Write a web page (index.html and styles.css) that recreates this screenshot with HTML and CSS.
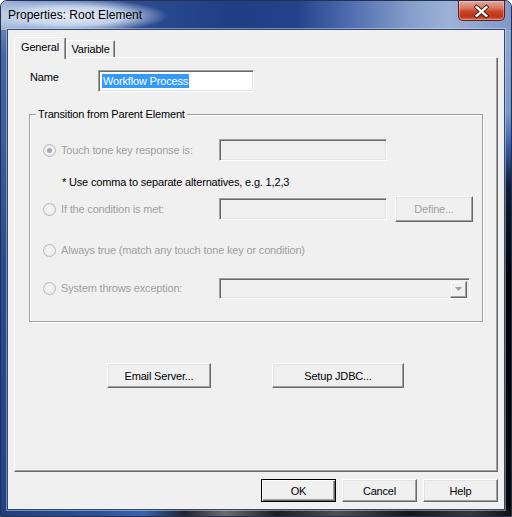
FILE: index.html
```html
<!DOCTYPE html>
<html>
<head>
<meta charset="utf-8">
<link rel="stylesheet" href="styles.css">
</head>
<body>
<div class="window">
  <div class="titlebar">
    <span class="title">Properties: Root Element</span>
    <div class="close">
      <svg width="47" height="20" viewBox="0 0 47 20">
        <path d="M19 6 L29 15 M29 6 L19 15" stroke="#3a1a14" stroke-width="4.2" stroke-linecap="square"/>
        <path d="M19 6 L29 15 M29 6 L19 15" stroke="#fff" stroke-width="2.4" stroke-linecap="square"/>
      </svg>
    </div>
  </div>
  <div class="client">
    <div class="tabs">
      <div class="tab active">General</div>
      <div class="tab">Variable</div>
    </div>
    <div class="panel">
      <div class="name-row">
        <span class="name-label">Name</span>
        <div class="edit name-edit"><span class="sel">Workflow Process</span></div>
      </div>
      <div class="group">
        <span class="legend">Transition from Parent Element</span>
        <div class="row row1">
          <span class="radio checked"></span>
          <span class="rlabel">Touch tone key response is:</span>
          <div class="edit field"></div>
        </div>
        <div class="hint">* Use comma to separate alternatives, e.g. 1,2,3</div>
        <div class="row row2">
          <span class="radio"></span>
          <span class="rlabel">If the condition is met:</span>
          <div class="edit field"></div>
          <div class="btn define">Define...</div>
        </div>
        <div class="row row3">
          <span class="radio"></span>
          <span class="rlabel wide">Always true (match any touch tone key or condition)</span>
        </div>
        <div class="row row4">
          <span class="radio"></span>
          <span class="rlabel">System throws exception:</span>
          <div class="edit combo">
            <div class="combo-btn">
              <svg width="7" height="4" viewBox="0 0 7 4"><path d="M0 0 H7 L3.5 4 Z" fill="#a0a0a0"/></svg>
            </div>
          </div>
        </div>
      </div>
      <div class="actions">
        <div class="btn email">Email Server...</div>
        <div class="btn jdbc">Setup JDBC...</div>
      </div>
    </div>
    <div class="footer">
      <div class="btn fbtn default">OK</div>
      <div class="btn fbtn">Cancel</div>
      <div class="btn fbtn">Help</div>
    </div>
  </div>
</div>
</body>
</html>
```
FILE: styles.css
```css
* { box-sizing: border-box; }
html, body { margin: 0; background: #fff; }
body {
  font-family: "Liberation Sans", Arial, sans-serif;
  font-size: 11px;
  letter-spacing: -0.17px;
  color: #000;
}
.window {
  width: 512px;
  height: 517px;
  display: flex;
  flex-direction: column;
  border: 1px solid #24324f;
  border-radius: 7px 7px 0 0;
  overflow: hidden;
  background:
    linear-gradient(90deg, #223f7a 0, #2b4f97 18%, #3a63ad 28%, #1e2430 36%, #6c6c6c 44%, #1d1d1d 54%, #505050 66%, #161616 80%, #3a3a3a 92%, #101010 100%) left bottom / 100% 8px no-repeat,
    linear-gradient(180deg, #9ab0d6 0, #7a95c7 22%, #3a5fa6 28%, #0f1c36 36%, #000 55%, #0a0a0a 100%) right top / 8px 100% no-repeat,
    linear-gradient(180deg, #8aa2cd 0, #4667a6 10%, #2a4b90 50%, #21418a 100%) left top / 8px 100% no-repeat;
}
.titlebar {
  height: 29px;
  flex: none;
  display: flex;
  align-items: flex-start;
  background:
    radial-gradient(ellipse 95px 17px at 72px 15px, rgba(236,242,250,0.97) 0, rgba(214,226,244,0.85) 55%, rgba(190,206,236,0) 100%),
    linear-gradient(90deg, #a6b9da 0, #6a87c0 10%, #2d4d92 26%, #1f3e84 45%, #23428a 58%, #4d6cae 68%, #859dca 80%, #9db2d7 88%, #8099c9 100%);
}
.title {
  padding: 7px 0 0 7px;
  font-family: "Segoe UI", "Liberation Sans", "Noto Sans", sans-serif;
  font-size: 12px;
  letter-spacing: 0;
  color: #000;
}
.close {
  margin-left: auto;
  margin-right: 6px;
  width: 47px;
  height: 20px;
  border: 1px solid #5a1e17;
  border-top: none;
  border-radius: 0 0 5px 5px;
  background: linear-gradient(180deg, #e3aa9c 0, #d77c66 35%, #c7462a 55%, #bf3215 80%, #d7654a 100%);
  box-shadow: inset 0 0 0 1px rgba(255,210,200,0.45);
  display: flex;
}
.close svg { display: block; margin-left: -1px; }
.client {
  margin: 0 7px;
  height: 479px;
  flex: none;
  background: #f0f0f0;
  box-shadow: 0 0 0 1px #34486b, 0 0 0 2px rgba(220,230,245,0.45);
  display: flex;
  flex-direction: column;
}
.tabs {
  display: flex;
  align-items: flex-end;
  height: 20px;
  margin: 7px 0 0 6px;
  position: relative;
  z-index: 1;
}
.tab {
  height: 17px;
  width: 49px;
  text-align: center;
  line-height: 16px;
  border: 1px solid;
  border-color: #fff #696969 transparent #fff;
  border-bottom: none;
  border-radius: 2px 2px 0 0;
  box-shadow: inset -1px 0 0 #a0a0a0;
  background: #f0f0f0;
}
.tab.active {
  width: 52px;
  height: 22px;
  margin-bottom: -2px;
  line-height: 18px;
}
.panel {
  margin: 0 6px;
  height: 415px;
  flex: none;
  border: 1px solid;
  border-color: #fff #696969 #696969 #fff;
  box-shadow: inset -1px -1px 0 #a0a0a0;
  display: flex;
  flex-direction: column;
  align-items: flex-start;
}
.name-row {
  display: flex;
  margin-top: 12px;
  padding-left: 15px;
}
.name-label {
  width: 68px;
  line-height: 14px;
}
.edit {
  border: 1px solid;
  border-color: #a0a0a0 #fff #fff #a0a0a0;
  box-shadow: inset 1px 1px 0 #696969, inset -1px -1px 0 #e3e3e3;
  background: #f0f0f0;
}
.name-edit {
  width: 156px;
  height: 22px;
  background: #fff;
  padding: 3px 0 0 3px;
}
.sel {
  display: inline-block;
  background: #3399ff;
  color: #fff;
  line-height: 14px;
  padding: 0 1px;
}
.group {
  margin: 22px 0 0 14px;
  width: 454px;
  height: 208px;
  border: 1px solid #a0a0a0;
  box-shadow: inset 1px 1px 0 #fff, 1px 1px 0 #fff;
  display: flex;
  flex-direction: column;
  align-items: flex-start;
}
.legend {
  margin: -8px 0 0 6px;
  padding: 0 2px;
  line-height: 14px;
  background: #f0f0f0;
}
.row {
  display: flex;
  align-items: center;
  padding-left: 13px;
  height: 22px;
}
.row1 { margin-top: 18px; }
.row2 { margin-top: 7px; height: 26px; }
.row3 { margin-top: 17px; }
.row4 { margin-top: 16px; }
.radio {
  width: 13px;
  height: 13px;
  border-radius: 50%;
  border: 1px solid #b9b9b9;
  background: radial-gradient(circle at 50% 50%, #f7f7f7 0, #ececec 60%, #e2e2e2 100%);
  display: flex;
  align-items: center;
  justify-content: center;
  flex: none;
}
.radio.checked::after {
  content: "";
  width: 5px;
  height: 5px;
  border-radius: 50%;
  background: #a8a8a8;
}
.rlabel {
  margin-left: 5px;
  width: 158px;
  color: #a0a0a0;
}
.rlabel.wide { width: auto; }
.field {
  width: 168px;
  height: 22px;
}
.hint {
  margin: 14px 0 0 32px;
  line-height: 14px;
}
.btn {
  border: 1px solid;
  border-color: #fff #696969 #696969 #fff;
  box-shadow: inset -1px -1px 0 #a0a0a0, inset 1px 1px 0 #e3e3e3;
  background: #f0f0f0;
  display: flex;
  align-items: center;
  justify-content: center;
}
.define {
  margin-left: 8px;
  width: 78px;
  height: 26px;
  color: #a0a0a0;
}
.combo {
  width: 251px;
  height: 21px;
  display: flex;
  justify-content: flex-end;
  padding: 2px;
}
.combo-btn {
  width: 17px;
  height: 17px;
  border: 1px solid;
  border-color: #f0f0f0 #696969 #696969 #f0f0f0;
  box-shadow: inset -1px -1px 0 #a0a0a0, inset 1px 1px 0 #fff;
  display: flex;
  align-items: center;
  justify-content: center;
}
.combo-btn svg { display: block; }
.actions {
  display: flex;
  margin: 41px 0 0 92px;
  gap: 61px;
}
.email { width: 104px; height: 25px; }
.jdbc { width: 132px; height: 25px; }
.footer {
  display: flex;
  justify-content: flex-end;
  gap: 6px;
  margin-top: 7px;
  padding-right: 6px;
}
.fbtn {
  width: 75px;
  height: 23px;
}
.fbtn.default {
  border: 1px solid #000;
  box-shadow: inset 1px 1px 0 #fff, inset -1px -1px 0 #696969, inset -2px -2px 0 #a0a0a0;
}
```
